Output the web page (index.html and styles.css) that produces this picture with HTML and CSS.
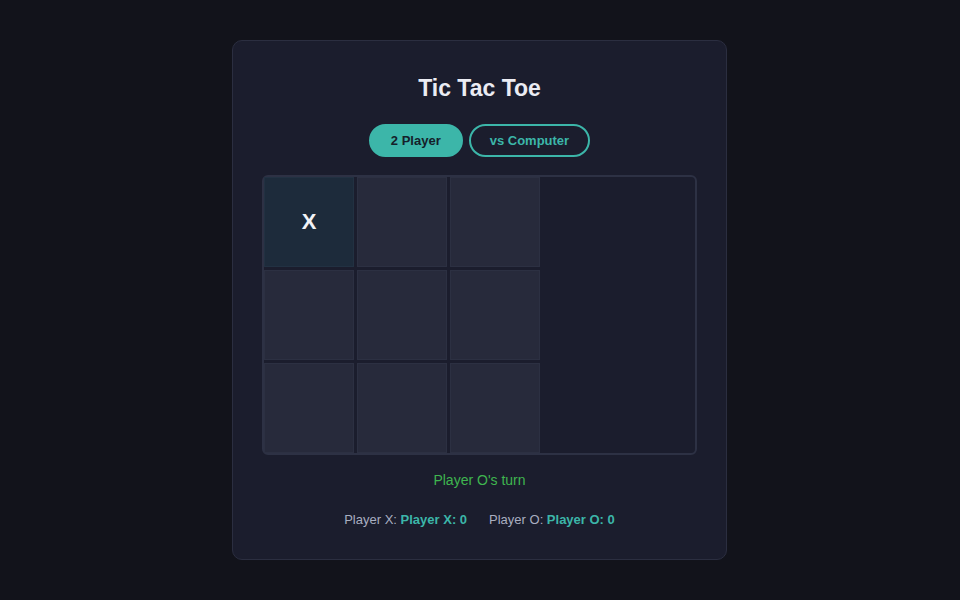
FILE: index.html
```html
<!DOCTYPE html>
<html>
<head>
<meta charset="utf-8">
<link rel="stylesheet" href="styles.css">
</head>
<body>
<div class="page">
  <div class="card">
    <h1 class="title">Tic Tac Toe</h1>
    <div class="modes">
      <button class="mode active">2 Player</button>
      <button class="mode">vs Computer</button>
    </div>
    <div class="board">
      <div class="cell filled">X</div>
      <div class="cell"></div>
      <div class="cell"></div>
      <div class="cell"></div>
      <div class="cell"></div>
      <div class="cell"></div>
      <div class="cell"></div>
      <div class="cell"></div>
      <div class="cell"></div>
    </div>
    <div class="status">Player O's turn</div>
    <div class="scores">
      <span class="score">Player X: <b>Player X: 0</b></span>
      <span class="score">Player O: <b>Player O: 0</b></span>
    </div>
  </div>
</div>
</body>
</html>
```
FILE: styles.css
```css
html, body {
  margin: 0;
  padding: 0;
  background: #12131b;
  font-family: "Liberation Sans", Arial, sans-serif;
}
.page {
  height: 600px;
  display: flex;
  justify-content: center;
  align-items: flex-start;
  padding-top: 40px;
  padding-right: 1px;
  box-sizing: border-box;
}
.card {
  width: 495px;
  box-sizing: border-box;
  background: #1b1d2d;
  border: 1px solid #2b2e40;
  border-radius: 10px;
  padding: 33px 29px 31px;
  display: flex;
  flex-direction: column;
  align-items: center;
}
.title {
  margin: 0;
  font-size: 23px;
  line-height: 28px;
  font-weight: bold;
  color: #ebecf3;
}
.modes {
  display: flex;
  gap: 6px;
  margin-top: 22px;
}
.mode {
  height: 33px;
  padding: 0 19px;
  border-radius: 17px;
  border: 2px solid #3cb6a9;
  background: transparent;
  color: #3cb6a9;
  font-family: "Liberation Sans", Arial, sans-serif;
  font-size: 13px;
  font-weight: bold;
  cursor: pointer;
}
.mode.active {
  background: #3cb6a9;
  color: #15202a;
  padding: 0 20px;
}
.board {
  margin-top: 18px;
  width: 435px;
  box-sizing: border-box;
  border: 2px solid #2d3144;
  border-radius: 6px;
  background: #1b1d2d;
  display: grid;
  grid-template-columns: repeat(3, 90px);
  grid-auto-rows: 90px;
  gap: 3px;
}
.cell {
  background: #272a3b;
  border: 1px solid #2c3042;
  box-sizing: border-box;
  display: flex;
  align-items: center;
  justify-content: center;
  color: #f2f3f7;
  font-size: 22px;
  font-weight: bold;
}
.cell.filled {
  background: #1d2b3b;
  border-color: #223142;
}
.status {
  margin-top: 17px;
  font-size: 14px;
  line-height: 16px;
  color: #3fb54f;
}
.scores {
  margin-top: 24px;
  display: flex;
  gap: 22px;
  font-size: 13px;
  line-height: 16px;
  color: #a9aec0;
}
.score b {
  color: #3cb6a9;
}
```
